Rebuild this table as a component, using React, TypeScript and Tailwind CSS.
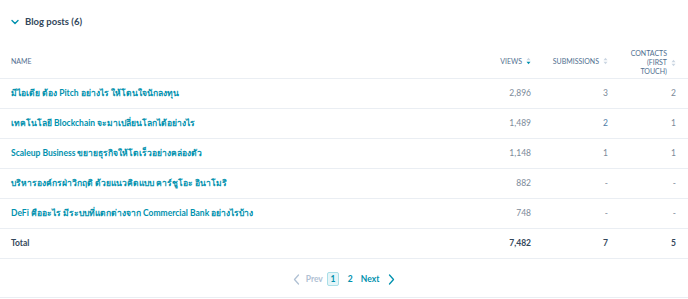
import React from "react";

type Row = {
  name: string;
  views: string;
  submissions: string;
  contacts: string;
  subLink?: boolean;
};

const rows: Row[] = [
  { name: "มีไอเดีย ต้อง Pitch อย่างไร ให้โดนใจนักลงทุน", views: "2,896", submissions: "3", contacts: "2" },
  { name: "เทคโนโลยี Blockchain จะมาเปลี่ยนโลกได้อย่างไร", views: "1,489", submissions: "2", contacts: "1", subLink: true },
  { name: "Scaleup Business ขยายธุรกิจให้โตเร็วอย่างคล่องตัว", views: "1,148", submissions: "1", contacts: "1" },
  { name: "บริหารองค์กรฝ่าวิกฤติ ด้วยแนวคิดแบบ คาร์ชูโอะ อินาโมริ", views: "882", submissions: "-", contacts: "-" },
  { name: "DeFi คืออะไร มีระบบที่แตกต่างจาก Commercial Bank อย่างไรบ้าง", views: "748", submissions: "-", contacts: "-" },
];

function SortIcon({ active }: { active?: boolean }) {
  return (
    <svg width="5" height="8" viewBox="0 0 5 8" className="ml-[4px] inline-block shrink-0">
      <path d="M0.5 3.2 L2.5 0.8 L4.5 3.2 Z" fill="#cbd6e2" />
      <path d="M0.5 4.8 L2.5 7.2 L4.5 4.8 Z" fill={active ? "#0091ae" : "#cbd6e2"} />
    </svg>
  );
}

export default function App() {
  return (
    <div
      className="w-[688px] h-[299px] bg-white text-[#33475b] overflow-hidden"
      style={{ fontFamily: "Lato, 'Noto Sans', 'DejaVu Sans', sans-serif" }}
    >
      <div className="h-[44px] flex items-center pl-[11px]">
        <svg width="8" height="6" viewBox="0 0 8 6" className="mr-[6px]">
          <path d="M1 1.5 L4 4.5 L7 1.5" fill="none" stroke="#0091ae" strokeWidth="1.4" strokeLinecap="round" strokeLinejoin="round" />
        </svg>
        <span className="text-[9.5px] font-bold text-[#33475b]">Blog posts (6)</span>
      </div>

      <table className="w-full border-collapse table-fixed">
        <colgroup>
          <col />
          <col className="w-[100px]" />
          <col className="w-[77px]" />
          <col className="w-[68px]" />
        </colgroup>
        <thead>
          <tr className="h-[34px] border-b border-[#eaeef3] text-[7px] uppercase text-[#516f90]">
            <th className="pl-[11px] text-left font-normal">Name</th>
            <th className="pr-[12px] font-normal">
              <div className="flex items-center justify-end">
                Views
                <SortIcon active />
              </div>
            </th>
            <th className="pr-[12px] font-normal">
              <div className="flex items-center justify-end">
                Submissions
                <SortIcon />
              </div>
            </th>
            <th className="pr-[12px] font-normal">
              <div className="flex items-center justify-end pt-[4px]">
                <span className="text-right leading-[9px]">
                  Contacts
                  <br />
                  (First
                  <br />
                  Touch)
                </span>
                <SortIcon />
              </div>
            </th>
          </tr>
        </thead>
        <tbody>
          {rows.map((r) => (
            <tr key={r.name} className="h-[30px] border-b border-[#eaeef3] text-[8.5px]">
              <td className="pl-[11px] text-[#0091ae] font-bold whitespace-nowrap">{r.name}</td>
              <td className="pr-[12px] text-right text-[#7c8a99]">{r.views}</td>
              <td className={`pr-[12px] text-right ${r.subLink ? "text-[#4f7da6]" : "text-[#7c8a99]"}`}>{r.submissions}</td>
              <td className="pr-[12px] text-right text-[#7c8a99]">{r.contacts}</td>
            </tr>
          ))}
          <tr className="h-[30px] border-b border-[#eaeef3] text-[8.5px] font-bold text-[#33475b]">
            <td className="pl-[11px]">Total</td>
            <td className="pr-[12px] text-right">7,482</td>
            <td className="pr-[12px] text-right">7</td>
            <td className="pr-[12px] text-right">5</td>
          </tr>
        </tbody>
      </table>

      <div className="h-[39px] pt-[3px] border-b border-[#eaeef3] flex items-center justify-center text-[8.5px] font-bold">
        <svg width="7" height="11" viewBox="0 0 7 11" className="mr-[6px]">
          <path d="M5.5 1 L1.5 5.5 L5.5 10" fill="none" stroke="#b0c1d4" strokeWidth="1.3" strokeLinecap="round" strokeLinejoin="round" />
        </svg>
        <span className="text-[#b0c1d4] mr-[4px]">Prev</span>
        <span className="w-[12px] h-[14px] flex items-center justify-center rounded-[2px] border border-[#a9dfe8] bg-[#e5f5f8] text-[#0091ae] mr-[9px]">
          1
        </span>
        <span className="text-[#0091ae] mr-[8px]">2</span>
        <span className="text-[#0091ae] mr-[9px]">Next</span>
        <svg width="7" height="11" viewBox="0 0 7 11">
          <path d="M1.5 1 L5.5 5.5 L1.5 10" fill="none" stroke="#0091ae" strokeWidth="1.3" strokeLinecap="round" strokeLinejoin="round" />
        </svg>
      </div>
    </div>
  );
}
